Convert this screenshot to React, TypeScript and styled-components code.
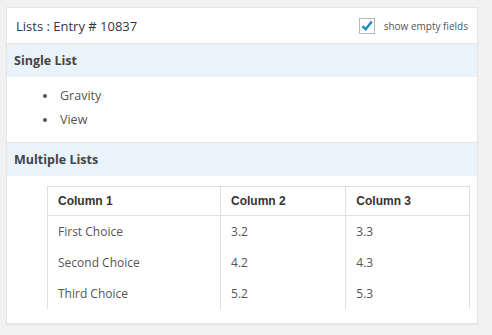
import React from 'react'
import styled, { createGlobalStyle } from 'styled-components'

const GlobalStyle = createGlobalStyle`
  html, body {
    margin: 0;
    padding: 0;
    background: #f1f1f1;
    font-family: "Open Sans", "Liberation Sans", sans-serif;
    color: #444;
  }
`

const Page = styled.div`
  padding: 7px 14px 13px 6px;
`

const Card = styled.div`
  background: #fff;
  border: 1px solid #e5e5e5;
  box-shadow: 0 1px 1px rgba(0, 0, 0, 0.04);
  padding-bottom: 14px;
`

const Header = styled.div`
  display: flex;
  align-items: center;
  justify-content: space-between;
  height: 35px;
  padding: 0 9px 0 9px;
  border-bottom: 1px solid #e5e5e5;
`

const Title = styled.span`
  font-size: 13px;
  color: #32373c;
`

const Toggle = styled.label`
  display: flex;
  align-items: center;
  gap: 9px;
  font-size: 10px;
  color: #555;
`

const Box = styled.span`
  width: 14px;
  height: 14px;
  border: 1px solid #b4b9be;
  display: flex;
  align-items: center;
  justify-content: center;
  background: #fff;
`

const SectionTitle = styled.div`
  background: #eaf2fa;
  height: 33px;
  display: flex;
  align-items: center;
  padding: 0 7px;
  font-size: 12.5px;
  font-weight: 700;
  color: #444;
  border-top: ${p => (p.$bordered ? '1px solid #e5e5e5' : 'none')};
`

const List = styled.ul`
  margin: 0;
  padding: 7px 0 10px 51px;
  list-style: disc;
  font-size: 12.5px;
  color: #555;

  li {
    height: 24px;
    line-height: 24px;
    padding-left: 2px;
  }

  li::marker {
    font-size: 11px;
  }
`

const TableWrap = styled.div`
  padding: 10px 7px 0 40px;
`

const Table = styled.table`
  width: 100%;
  border-collapse: collapse;
  border: 1px solid #dfdfdf;
  border-bottom: none;
`

const Th = styled.th`
  text-align: left;
  font-family: "Liberation Sans", Arial, sans-serif;
  font-size: 12px;
  font-weight: 700;
  color: #333;
  height: 28px;
  padding: 0 10px;
  border-right: 1px solid #dfdfdf;
  border-bottom: 1px solid #dfdfdf;
`

const Td = styled.td`
  font-size: 12px;
  color: #555;
  height: 31px;
  padding: 0 10px;
  border-right: 1px solid #dfdfdf;
`

const rows = [
  ['First Choice', '3.2', '3.3'],
  ['Second Choice', '4.2', '4.3'],
  ['Third Choice', '5.2', '5.3'],
]

const App = () => {
  return (
    <>
      <GlobalStyle />
      <Page>
        <Card>
          <Header>
            <Title>Lists : Entry # 10837</Title>
            <Toggle>
              <Box>
                <svg width="14" height="14" viewBox="0 0 14 14">
                  <path d="M2.5 7.2 L5.6 10.2 L11.8 2.6" fill="none" stroke="#1e8cbe" strokeWidth="2.4" />
                </svg>
              </Box>
              show empty fields
            </Toggle>
          </Header>
          <SectionTitle>Single List</SectionTitle>
          <List>
            <li>Gravity</li>
            <li>View</li>
          </List>
          <SectionTitle $bordered>Multiple Lists</SectionTitle>
          <TableWrap>
            <Table>
              <colgroup>
                <col style={{ width: '41%' }} />
                <col style={{ width: '29.7%' }} />
                <col />
              </colgroup>
              <thead>
                <tr>
                  <Th>Column 1</Th>
                  <Th>Column 2</Th>
                  <Th>Column 3</Th>
                </tr>
              </thead>
              <tbody>
                {rows.map(row => (
                  <tr key={row[0]}>
                    {row.map((cell, i) => (
                      <Td key={i}>{cell}</Td>
                    ))}
                  </tr>
                ))}
              </tbody>
            </Table>
          </TableWrap>
        </Card>
      </Page>
    </>
  )
}

export default App
